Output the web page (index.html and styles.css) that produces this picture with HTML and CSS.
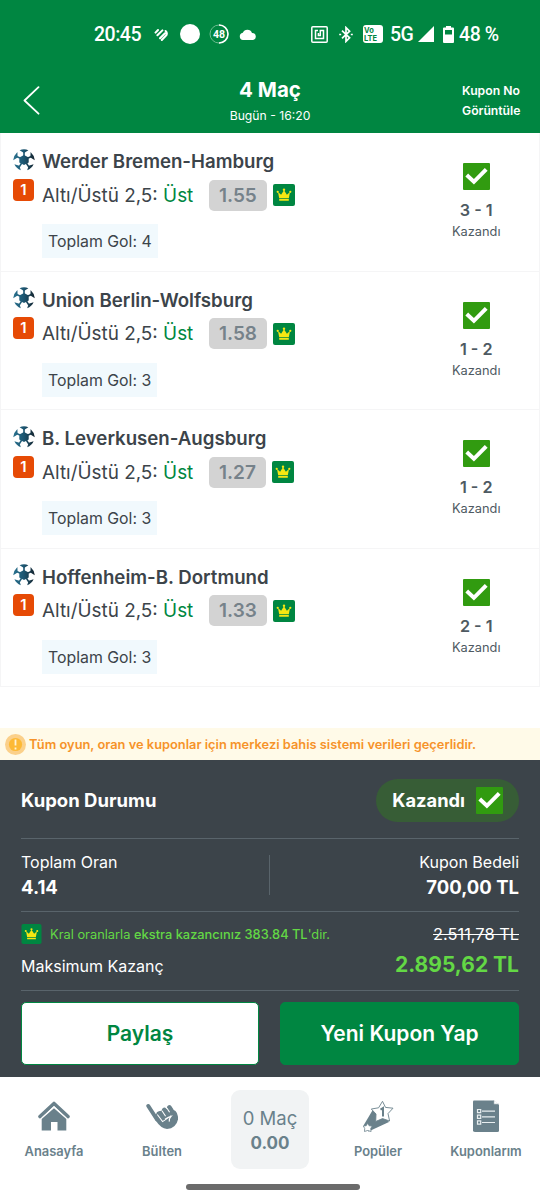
FILE: index.html
```html
<!DOCTYPE html>
<html lang="tr">
<head>
<meta charset="utf-8">
<title>Kupon</title>
<link rel="stylesheet" href="styles.css">
</head>
<body>
<svg class="defs" width="0" height="0">
  <linearGradient id="tile" x1="0" y1="0" x2="22" y2="0" gradientUnits="userSpaceOnUse"><stop offset="0" stop-color="#2b7390"/><stop offset=".5" stop-color="#1c5570"/><stop offset="1" stop-color="#14222c"/></linearGradient>
  <symbol id="ball" viewBox="0 0 22 22">
    <path d="M11 6 15.700 8.600V13.400L11 16 6.300 13.400V8.600Z" fill="url(#tile)"/>
    <path d="M15 9 19 7.200M13.300 14l2.600 4.200M8.700 14l-2.600 4.200M7 9 3 7.200M11 7.500V2.500h.01" fill="none" stroke="url(#tile)" stroke-width="1.600"/>
    <path d="M6.600 1.200Q11-.8 15.400 1.200L11 4ZM17.600 3Q21 6 21.800 11.200L17.400 8.400ZM20.600 15.200Q18.800 19.200 14.200 21.200L15.600 16.800ZM7.800 21.200Q3.200 19.200 1.400 15.200L6.400 16.800ZM4.400 3Q1 6 .2 11.200L4.600 8.400Z" fill="url(#tile)"/>
  </symbol>
  <symbol id="crown" viewBox="0 0 22 22">
    <rect width="22" height="22" rx="2" fill="#008641"/>
    <path d="M5 8 8.100 10.800l2.900-4.600 2.900 4.600L17 8l-1.200 6.300H6.200ZM6.200 15h9.600v1.800H6.200Z" fill="#f6e712"/>
    <circle cx="4.700" cy="7.800" r="1.100" fill="#f6e712"/><circle cx="11" cy="5.800" r="1.200" fill="#f6e712"/><circle cx="17.300" cy="7.800" r="1.100" fill="#f6e712"/>
  </symbol>
  <symbol id="check" viewBox="0 0 27 27">
    <rect width="27" height="27" rx="1" fill="#319b10"/>
    <path d="M5.200 13.400 10.900 18.800 21.800 7.800" fill="none" stroke="#fff" stroke-width="4" stroke-linecap="square"/>
  </symbol>
</svg>

<header class="top">
  <div class="status">
    <span class="clock">20:45</span>
    <svg class="s-heart" width="14" height="13" viewBox="0 0 14 13" fill="none" stroke="#fff" stroke-width="2" stroke-linecap="round"><path d="M1.500 4.600 4 2M3.400 7.300 8.400 2.400M6 10.200l5-5M7.800 12 12.400 7.200Q13.600 4.800 11.600 3"/></svg>
    <i class="s-dot"></i>
    <svg class="s-ring" width="20" height="20" viewBox="0 0 20 20" fill="none"><circle cx="10" cy="10" r="9" stroke="#6dbb8f" stroke-width="1"/><path d="M10 1a9 9 0 0 1 0 18" stroke="#fff" stroke-width="1.600"/><text x="10" y="13.800" text-anchor="middle" class="ring-text">48</text></svg>
    <svg class="s-cloud" width="18" height="11" viewBox="0 0 18 11"><path d="M4 11a3.700 3.700 0 0 1-.2-7.300A5 5 0 0 1 13 3.900 3.600 3.600 0 0 1 14 11Z" fill="#fff"/></svg>
    <svg class="s-nfc" width="17" height="17" viewBox="0 0 17 17" fill="none" stroke="#fff" stroke-width="1.500"><rect x=".8" y=".8" width="15.400" height="15.400" rx="1"/><path d="M7 4.400H4.500v8.200h8V4.400H9.300v5.200H7.400V7"/></svg>
    <svg class="s-bt" width="14" height="17" viewBox="0 0 14 17" fill="none" stroke="#fff" stroke-width="1.700"><path d="m3 4.600 7.600 7.200L7 15.400V1.600l3.600 3.600L3 12.400"/><path d="M.2 8.500h2M11.800 8.500h2"/></svg>
    <span class="volte">Vo<br>LTE</span>
    <span class="net">5G</span>
    <svg class="s-sig" width="16" height="16" viewBox="0 0 16 16"><path d="M0 16 16 0V16Z" fill="#fff"/></svg>
    <svg class="s-bat" width="11" height="17" viewBox="0 0 11 17"><path fill="#fff" fill-rule="evenodd" d="M3 0h5v1.600h2q1 0 1 1V16q0 1-1 1H1q-1 0-1-1V2.600q0-1 1-1h2ZM2 4v4.600h7V4Z"/></svg>
    <span class="pct">48 %</span>
  </div>
  <div class="titlebar">
    <svg class="back" width="17" height="29" viewBox="0 0 17 29" fill="none" stroke="#fff" stroke-width="1.800" stroke-linecap="round" stroke-linejoin="round"><path d="M15.500 1.200 1.500 14.500 15.500 27.700"/></svg>
    <div class="titles"><h1>4 Maç</h1><p>Bugün - 16:20</p></div>
    <div class="coupon-no">Kupon No<br>Görüntüle</div>
  </div>
</header>

<main class="matches">
  <article class="match">
    <div class="marks"><svg class="ball"><use href="#ball"/></svg><span class="mbs">1</span></div>
    <div class="info">
      <h2>Werder Bremen-Hamburg</h2>
      <div class="bet"><span class="pick">Altı/Üstü 2,5: <b>Üst</b></span><span class="odd">1.55</span><svg class="crown"><use href="#crown"/></svg></div>
      <span class="goals">Toplam Gol: 4</span>
    </div>
    <div class="result"><svg class="check"><use href="#check"/></svg><strong>3 - 1</strong><span>Kazandı</span></div>
  </article>
  <article class="match">
    <div class="marks"><svg class="ball"><use href="#ball"/></svg><span class="mbs">1</span></div>
    <div class="info">
      <h2>Union Berlin-Wolfsburg</h2>
      <div class="bet"><span class="pick">Altı/Üstü 2,5: <b>Üst</b></span><span class="odd">1.58</span><svg class="crown"><use href="#crown"/></svg></div>
      <span class="goals">Toplam Gol: 3</span>
    </div>
    <div class="result"><svg class="check"><use href="#check"/></svg><strong>1 - 2</strong><span>Kazandı</span></div>
  </article>
  <article class="match">
    <div class="marks"><svg class="ball"><use href="#ball"/></svg><span class="mbs">1</span></div>
    <div class="info">
      <h2>B. Leverkusen-Augsburg</h2>
      <div class="bet"><span class="pick">Altı/Üstü 2,5: <b>Üst</b></span><span class="odd">1.27</span><svg class="crown"><use href="#crown"/></svg></div>
      <span class="goals">Toplam Gol: 3</span>
    </div>
    <div class="result"><svg class="check"><use href="#check"/></svg><strong>1 - 2</strong><span>Kazandı</span></div>
  </article>
  <article class="match">
    <div class="marks"><svg class="ball"><use href="#ball"/></svg><span class="mbs">1</span></div>
    <div class="info">
      <h2>Hoffenheim-B. Dortmund</h2>
      <div class="bet"><span class="pick">Altı/Üstü 2,5: <b>Üst</b></span><span class="odd">1.33</span><svg class="crown"><use href="#crown"/></svg></div>
      <span class="goals">Toplam Gol: 3</span>
    </div>
    <div class="result"><svg class="check"><use href="#check"/></svg><strong>2 - 1</strong><span>Kazandı</span></div>
  </article>
</main>

<p class="notice">
  <svg width="21" height="21" viewBox="0 0 21 21"><circle cx="10.500" cy="10.500" r="10.500" fill="#fbd08a"/><circle cx="10.500" cy="10.500" r="6.600" fill="#fdb935"/><path d="M10.500 5.500v6M10.500 13.400v2" stroke="#fff3d6" stroke-width="1.800"/></svg>
  <span>Tüm oyun, oran ve kuponlar için merkezi bahis sistemi verileri geçerlidir.</span>
</p>

<section class="summary">
  <div class="state"><h3>Kupon Durumu</h3><div class="won"><span>Kazandı</span><svg class="check"><use href="#check"/></svg></div></div>
  <div class="totals">
    <div class="cell"><span>Toplam Oran</span><strong>4.14</strong></div>
    <i class="split"></i>
    <div class="cell right"><span>Kupon Bedeli</span><strong>700,00 TL</strong></div>
  </div>
  <div class="payout">
    <div class="extra"><svg class="crown"><use href="#crown"/></svg><span>Kral oranlarla <b>ekstra kazancınız 383.84 TL</b>'dir.</span><s>2.511,78 TL</s></div>
    <div class="max"><span>Maksimum Kazanç</span><strong>2.895,62 TL</strong></div>
  </div>
  <div class="actions"><button class="share">Paylaş</button><button class="fresh">Yeni Kupon Yap</button></div>
</section>

<nav class="nav">
  <a class="tab"><svg width="32" height="32" viewBox="0 0 32 32"><path d="M2 16.500 16 3.500 30 16.500" fill="none" stroke="#6a818b" stroke-width="3.600" stroke-linecap="round" stroke-linejoin="round"/><path d="M16 8.200 28.300 19v11.500H19.500V22h-6.500v8.500H3.700V19Z" fill="#6a818b"/><path d="M3.500 18.200 16 6.600 28.500 18.200" fill="none" stroke="#fff" stroke-width="1"/></svg><span>Anasayfa</span></a>
  <a class="tab"><svg width="32" height="32" viewBox="0 0 32 32">
    <path d="M2.300 6 11 19.500" stroke="#6a818b" stroke-width="4" stroke-linecap="round"/>
    <path d="M9 17 11 12 24 8 29.500 11Q32.500 14 32 19.500 30 28.500 21 29 15 28.800 9 19.500Z" fill="#6a818b"/>
    <path d="M14 13.500l3.500 5M18.200 9.800l2.500 3.800M23.300 7.300l2 3" stroke="#6a818b" stroke-width="4.600" stroke-linecap="round"/>
    <path d="M11.300 14.500 16.600 21.600 25.300 15.600M16 10.800l3.600 5.400M21 8.200l2.600 4.100M19 19.200q3.600-2.400 6.300-3-2.500 2.600-2 5.400" fill="none" stroke="#fff" stroke-width="1.100"/>
  </svg><span>Bülten</span></a>
  <a class="slip"><span>0 Maç</span><strong>0.00</strong></a>
  <a class="tab"><svg width="32" height="32" viewBox="0 0 32 32"><path d="M11 9.500 1.500 25.500l5 6L27 22 20 12Z" fill="#6a818b"/><path d="M20.500 1.300 23.500 7.400 31 8.200 26 13.600 27.600 21 20.500 18.600 13.700 21.500 14 14 9.300 9 16.600 7.800Z" fill="#fff" stroke="#6a818b" stroke-width=".9"/><path d="m5.500 23.300 1.700 2.500 3 .2-1.500 2.500.4 3-3.600-1L2.500 31.500l.2-3.100L1.300 26l2.900-.3Z" fill="#fff" stroke="#6a818b" stroke-width=".8"/><path d="M18.500 9.600 21 8v8.500" fill="none" stroke="#6a818b" stroke-width="2"/></svg><span>Popüler</span></a>
  <a class="tab"><svg width="32" height="32" viewBox="0 0 32 32"><path d="M4 .5H23.800L29 5v25.500q0 1.500-1.500 1.500h-22Q3 32 3 30.500v-29Q3 .5 4 .5Z" fill="#6a818b"/><path d="M23.800.5V4.200H29" fill="#fff" stroke="#6a818b" stroke-width=".5"/><path d="M12 11.200h13M12 16.900h13M12 22.500h13" stroke="#e8eef0" stroke-width="1.200"/><path d="M7.500 9.500h3.200v3.200H7.500ZM7.500 15.200h3.200v3.200H7.500ZM7.500 20.900h3.200v3.200H7.500Z" fill="none" stroke="#e8eef0" stroke-width="1.200"/></svg><span>Kuponlarım</span></a>
  <i class="homebar"></i>
</nav>
</body>
</html>
```

FILE: styles.css
```css
* { box-sizing: border-box; margin: 0; padding: 0; }
body { width: 540px; height: 1200px; overflow: hidden; background: #fff; font-family: Inter, "Liberation Sans", sans-serif; color: #3c444a; }
svg { display: block; flex: none; }
.defs { position: absolute; }

.top { height: 133px; background: #008641; color: #fff; }
.status { display: flex; align-items: center; height: 68px; padding-left: 94px; font-family: Roboto, sans-serif; font-weight: 500; font-size: 19.500px; }
.status > * { flex: none; }
.clock { width: 60px; letter-spacing: -0.500px; }
.s-heart { margin-right: 12px; }
.s-dot { width: 20px; height: 20px; border-radius: 50%; background: #fff; margin-right: 9px; }
.ring-text { font: 700 10.500px Roboto, sans-serif; fill: #fff; }
.s-ring { margin-right: 10px; }
.s-cloud { margin-right: 54px; }
.s-nfc { margin-right: 11px; }
.s-bt { margin-right: 10px; }
.volte { width: 20px; height: 18px; border-radius: 3px; background: #fff; color: #008641; font: 700 7.500px/7.500px Inter, sans-serif; padding: 2px 0 0 1px; margin-right: 7px; }
.net { width: 28px; letter-spacing: -0.700px; }
.s-sig { margin-right: 9px; }
.s-bat { margin-right: 5px; }
.pct { letter-spacing: -0.400px; }
.titlebar { display: grid; grid-template-columns: 140px 1fr 140px; height: 65px; }
.back { margin: 18px 0 0 23px; }
.titles { text-align: center; padding-top: 9px; }
.titles h1 { font-size: 20.500px; line-height: 26px; font-weight: 700; }
.titles p { font-size: 12.200px; line-height: 26px; }
.coupon-no { padding: 13px 0 0 62px; font-size: 12.200px; line-height: 20px; font-weight: 600; white-space: nowrap; }

.matches { height: 595px; padding-top: 0.300px; }
.match { display: grid; grid-template-columns: 42px 1fr 127px; height: 138.500px; border: solid #f5f5f6; border-width: 0 1px 1px; }
.marks { padding: 15.500px 0 0 12px; }
.ball { width: 22px; height: 22px; }
.mbs { display: block; width: 21px; height: 22px; margin-top: 8px; border-radius: 4px; background: #e64a05; color: #fff; font-size: 15px; line-height: 22px; font-weight: 600; text-align: center; }
.info { padding-top: 14px; margin-left: -1px; }
.info h2 { font-size: 18.650px; line-height: 28px; font-weight: 600; white-space: nowrap; }
.bet { display: flex; align-items: center; height: 40px; }
.pick { width: 167px; font-size: 18.900px; white-space: nowrap; }
.pick b { font-weight: 400; color: #008641; }
.odd { height: 31px; padding: 0 10px; border-radius: 5px; background: #d3d3d3; color: #76828a; font-size: 19px; line-height: 31px; font-weight: 600; }
.bet .crown { width: 22px; height: 22px; margin-left: 6px; }
.goals { display: inline-block; margin-top: 9px; height: 34px; padding: 0 6px; background: #f1f9fd; font-size: 15.850px; line-height: 35px; }
.result { display: flex; flex-direction: column; align-items: center; padding: 30px 0 0 1.500px; color: #4e5a62; }
.check { width: 27px; height: 27px; }
.result strong { font-size: 16.200px; line-height: 22px; margin-top: 9px; font-weight: 600; }
.result span { font-size: 12.800px; line-height: 21px; }

.notice { display: flex; align-items: center; gap: 3px; height: 32px; padding-left: 5px; background: #fffae8; color: #f6932a; font-size: 12.850px; font-weight: 600; white-space: nowrap; }

.summary { height: 317px; padding: 0 21px; background: #3c444a; color: #fff; }
.state { display: flex; justify-content: space-between; align-items: center; height: 79px; border-bottom: 1px solid #59646b; }
.state h3 { font-size: 18.500px; font-weight: 700; padding-top: 2px; }
.won { display: flex; align-items: center; gap: 11px; height: 43px; margin-top: 2px; padding: 0 16px; border-radius: 22px; background: #375d36; font-size: 18.300px; font-weight: 700; }
.totals { display: flex; justify-content: space-between; height: 73px; padding-top: 10px; border-bottom: 1px solid #59646b; }
.cell { display: flex; flex-direction: column; width: 200px; }
.cell span { font-size: 16px; line-height: 26px; }
.cell strong { font-size: 18.500px; line-height: 25px; }
.right { text-align: right; }
.split { width: 1px; height: 40px; margin-top: 6px; margin-left: -1px; background: #59646b; }
.payout { height: 79px; padding-top: 8px; border-bottom: 1px solid #59646b; }
.extra { display: flex; align-items: center; height: 28px; font-size: 12.850px; color: #63d845; }
.extra .crown { width: 21px; height: 20px; margin-right: 8px; }
.extra b { font-weight: 500; }
.extra s { margin-left: auto; color: #fff; font-size: 16.400px; }
.max { display: flex; justify-content: space-between; align-items: center; height: 35px; font-size: 16px; }
.max strong { font-size: 21px; font-weight: 700; color: #63d845; margin-top: -2px; }
.actions { display: grid; grid-template-columns: 238px 239px; justify-content: space-between; padding-top: 11px; }
.actions button { height: 63px; border: 1px solid #008641; border-radius: 5px; font: 600 21px Inter, sans-serif; }
.actions .share { background: #fff; color: #008641; }
.actions .fresh { background: #008641; color: #fff; }

.nav { display: grid; grid-template-columns: repeat(5, 108px); grid-template-rows: 107px 6px; height: 123px; background: #fff; color: #6a818b; }
.tab { display: flex; flex-direction: column; align-items: center; padding-top: 23px; font-size: 12.900px; font-weight: 600; line-height: 20px; }
.tab span { margin-top: 9.500px; }
.slip { justify-self: center; display: flex; flex-direction: column; align-items: center; width: 78px; height: 79px; margin-top: 13px; padding-top: 16px; border-radius: 9px; background: #f1f3f4; }
.slip span { font-size: 18.500px; line-height: 25px; }
.slip strong { font-size: 17px; line-height: 24px; }
.homebar { grid-column: 1 / -1; justify-self: center; width: 174px; height: 6px; margin-left: 6px; border-radius: 3px; background: #6b6b6b; }
```
